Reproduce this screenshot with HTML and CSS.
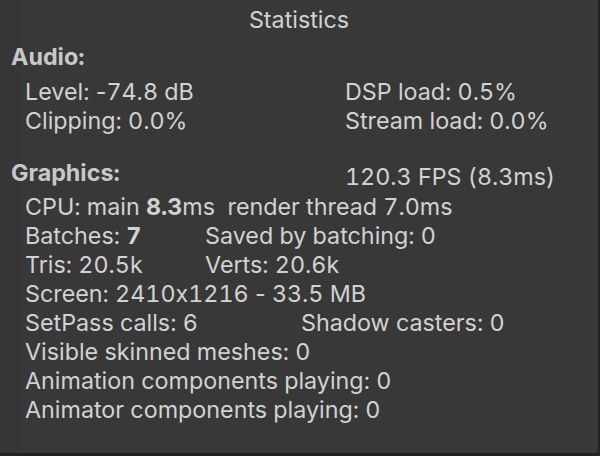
FILE: index.html
```html
<!DOCTYPE html>
<html>
<head>
<meta charset="utf-8">
<link rel="stylesheet" href="styles.css">
</head>
<body>
<div class="window">
  <div class="strip"></div>
  <div class="panel">
    <div class="title">Statistics</div>
    <div class="header audio-h">Audio:</div>
    <div class="section audio">
      <div class="row"><span class="c-audio">Level: <span class="dash">-</span>74.8 dB</span><span>DSP load: 0.5%</span></div>
      <div class="row"><span class="c-audio">Clipping: 0.0%</span><span>Stream load: 0.0%</span></div>
    </div>
    <div class="gfx-head">
      <div class="header g-h">Graphics:</div>
      <div class="fps">120.3 FPS (8.3ms)</div>
    </div>
    <div class="section gfx">
      <div class="row">CPU: main&nbsp;<b>8.3</b>ms&nbsp;&nbsp;render thread 7.0ms</div>
      <div class="row"><span class="c-batch">Batches: <b>7</b></span><span>Saved by batching: 0</span></div>
      <div class="row"><span class="c-batch">Tris: 20.5k</span><span>Verts: 20.6k</span></div>
      <div class="row">Screen: 2410x1216 <span class="dash">-</span> 33.5 MB</div>
      <div class="row"><span class="c-setpass">SetPass calls: 6</span><span>Shadow casters: 0</span></div>
      <div class="row">Visible skinned meshes: 0</div>
      <div class="row">Animation components playing: 0</div>
      <div class="row">Animator components playing: 0</div>
    </div>
  </div>
</div>
</body>
</html>
```

FILE: styles.css
```css
html, body {
  margin: 0;
  padding: 0;
  background: #282828;
}
.window {
  width: 600px;
  height: 456px;
  box-sizing: border-box;
  background: #383838;
  border-right: 2px solid #222222;
  border-bottom: 3px solid #222222;
  border-bottom-right-radius: 6px;
  display: flex;
  font-family: Inter, "Noto Sans", sans-serif;
  font-size: 23.3px;
  font-feature-settings: "calt" 0, "tnum" 1;
  color: #d2d2d2;
  overflow: hidden;
}
.strip {
  width: 20px;
  flex: none;
  background: #363636;
  border-right: 1px solid #343434;
}
.panel {
  flex: 1;
  margin-left: -21px;
  padding-left: 11px;
  line-height: 28.9px;
}
.title {
  text-align: center;
  margin-top: 6px;
  margin-left: -11px;
}
.header {
  font-weight: 700;
  color: #c8c8c8;
}
.audio-h {
  margin-top: 8px;
}
.section {
  padding-left: 14px;
}
.audio {
  margin-top: 6.5px;
}
.row {
  display: flex;
  white-space: pre;
}
.row b {
  font-weight: 700;
}
.dash {
  font-feature-settings: "calt" 0, "tnum" 0;
}
.c-audio {
  width: 320px;
  flex: none;
}
.c-batch {
  width: 180px;
  flex: none;
}
.c-setpass {
  width: 276px;
  flex: none;
}
.gfx-head {
  display: flex;
  margin-top: 22.7px;
}
.g-h {
  width: 334px;
  flex: none;
}
.fps {
  padding-top: 4.5px;
}
.gfx {
  margin-top: 1px;
}
```
